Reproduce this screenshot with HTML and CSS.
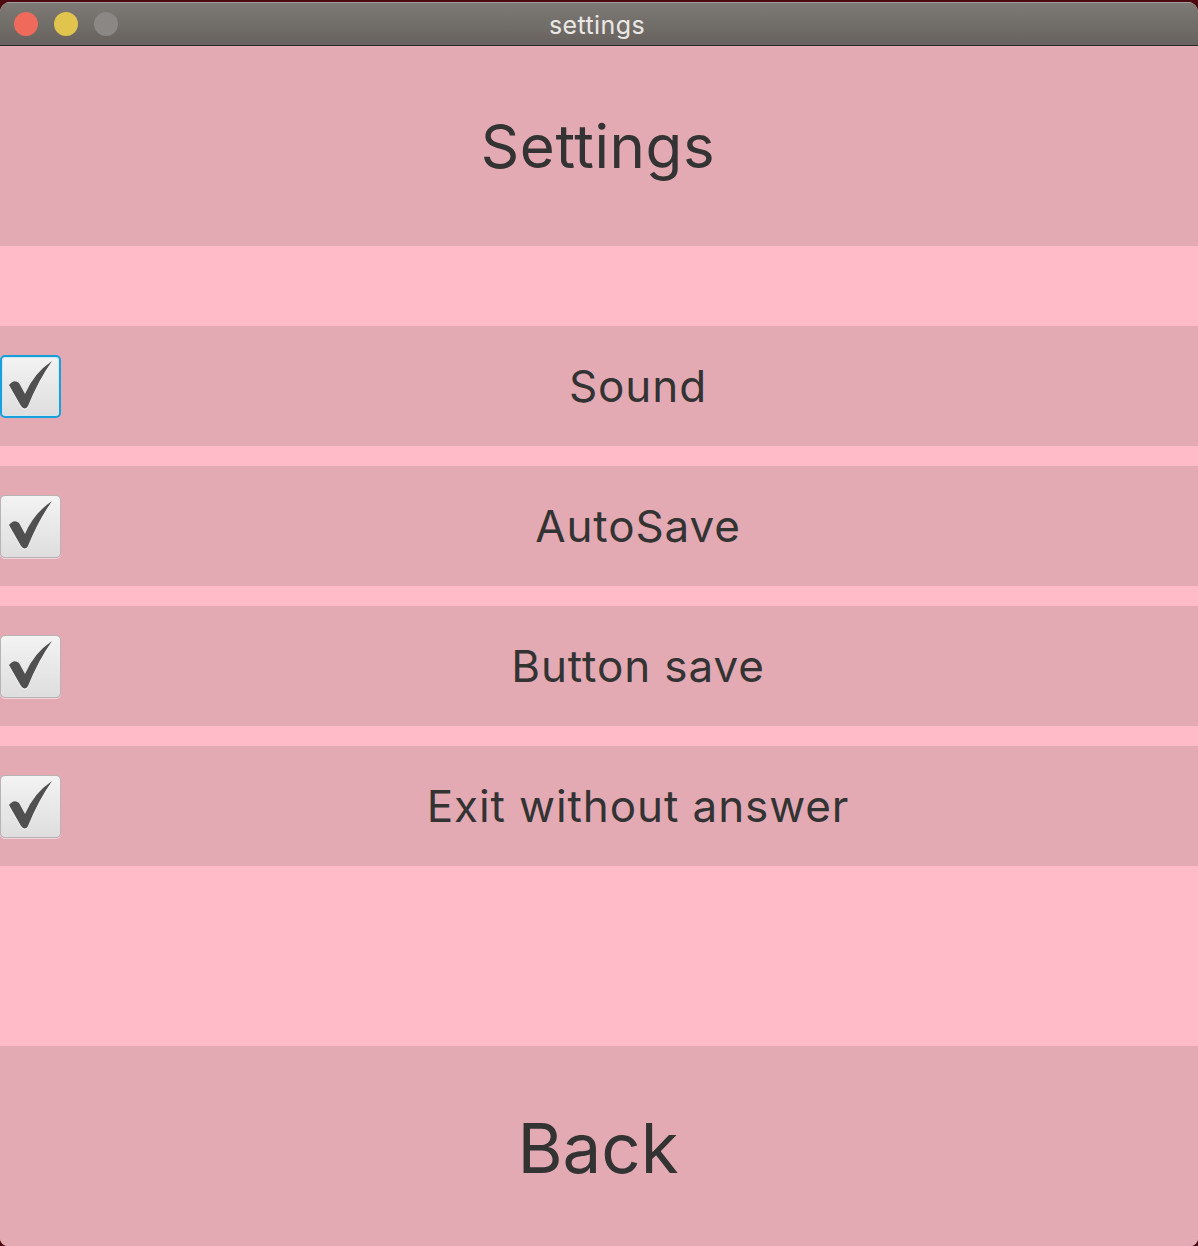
FILE: index.html
```html
<!DOCTYPE html>
<html>
<head>
<meta charset="utf-8">
<link rel="stylesheet" href="styles.css">
</head>
<body>
<div class="window">
  <div class="titlebar">
    <div class="lights">
      <span class="light red"></span>
      <span class="light yellow"></span>
      <span class="light gray"></span>
    </div>
    <div class="title">settings</div>
  </div>
  <div class="content">
    <div class="header">Settings</div>
    <div class="spacer-top"></div>
    <div class="row">
      <div class="checkbox focused">
        <svg viewBox="0 0 60 60" class="check"><path class="shadow" d="M8 30 Q13 23.5 18 28 L24 39 Q33 18 51 6 Q37 26 27 51 Q24 56 20 51 Z"/><path d="M8 29 Q13 22.5 18 27 L24 38 Q33 17 51 5 Q37 25 27 50 Q24 55 20 50 Z"/></svg>
      </div>
      <div class="label">Sound</div>
    </div>
    <div class="gap"></div>
    <div class="row">
      <div class="checkbox">
        <svg viewBox="0 0 60 60" class="check"><path class="shadow" d="M8 30 Q13 23.5 18 28 L24 39 Q33 18 51 6 Q37 26 27 51 Q24 56 20 51 Z"/><path d="M8 29 Q13 22.5 18 27 L24 38 Q33 17 51 5 Q37 25 27 50 Q24 55 20 50 Z"/></svg>
      </div>
      <div class="label">AutoSave</div>
    </div>
    <div class="gap"></div>
    <div class="row">
      <div class="checkbox">
        <svg viewBox="0 0 60 60" class="check"><path class="shadow" d="M8 30 Q13 23.5 18 28 L24 39 Q33 18 51 6 Q37 26 27 51 Q24 56 20 51 Z"/><path d="M8 29 Q13 22.5 18 27 L24 38 Q33 17 51 5 Q37 25 27 50 Q24 55 20 50 Z"/></svg>
      </div>
      <div class="label">Button save</div>
    </div>
    <div class="gap"></div>
    <div class="row">
      <div class="checkbox">
        <svg viewBox="0 0 60 60" class="check"><path class="shadow" d="M8 30 Q13 23.5 18 28 L24 39 Q33 18 51 6 Q37 26 27 51 Q24 56 20 51 Z"/><path d="M8 29 Q13 22.5 18 27 L24 38 Q33 17 51 5 Q37 25 27 50 Q24 55 20 50 Z"/></svg>
      </div>
      <div class="label">Exit without answer</div>
    </div>
    <div class="spacer-bottom"></div>
    <div class="back">Back</div>
  </div>
</div>
</body>
</html>
```

FILE: styles.css
```css
* { box-sizing: border-box; }
html, body {
  margin: 0;
  padding: 0;
  width: 1198px;
  height: 1246px;
  overflow: hidden;
  background: #4a0a10;
}
body {
  font-family: Inter, "Noto Sans", sans-serif;
  color: #333333;
  padding-top: 2px;
}
.window {
  width: 1198px;
  height: 1244px;
  border-radius: 10px 10px 8px 8px;
  overflow: hidden;
  display: flex;
  flex-direction: column;
  background: #ffbcc8;
}
.titlebar {
  height: 44px;
  flex: none;
  background: linear-gradient(#7d7975, #67625d);
  border-top: 1px solid #a29d98;
  border-bottom: 1px solid #2a2725;
  display: flex;
  align-items: center;
  justify-content: center;
  position: relative;
}
.lights {
  position: absolute;
  left: 14px;
  top: 9px;
  display: flex;
  gap: 16px;
}
.light {
  width: 24px;
  height: 24px;
  border-radius: 50%;
  display: block;
}
.red { background: #ef6a5b; }
.yellow { background: #e1c44d; }
.gray { background: #8b8784; }
.title {
  font-size: 25px;
  color: #ebe8e5;
  letter-spacing: 0.4px;
  margin-top: 2px;
  margin-right: 4px;
}
.content {
  flex: 1;
  display: flex;
  flex-direction: column;
}
.header {
  height: 200px;
  background: #e4aab4;
  display: flex;
  align-items: center;
  justify-content: center;
  font-size: 60px;
  letter-spacing: 0.6px;
  padding-right: 2px;
}
.spacer-top { height: 80px; }
.row {
  height: 120px;
  background: #e4aab4;
  display: flex;
  align-items: center;
}
.gap { height: 20px; }
.checkbox {
  width: 61px;
  height: 63px;
  flex: none;
  margin-right: 17px;
  border-radius: 5px;
  border: 1px solid #b9b3b4;
  background: linear-gradient(#f3f3f3, #dedede);
  box-shadow: 0 1px 0 rgba(255,255,255,0.5);
  display: flex;
  align-items: center;
  justify-content: center;
}
.checkbox.focused {
  border: 2px solid #16a0dc;
  box-shadow: inset 0 0 0 1px #cfe7f2;
}
.check {
  width: 60px;
  height: 60px;
  flex: none;
}
.check path { fill: #505050; }
.check path.shadow { fill: #ffffff; }
.label {
  flex: 1;
  text-align: center;
  font-size: 44px;
  letter-spacing: 0.9px;
}
.spacer-bottom { height: 180px; }
.back {
  flex: 1;
  background: #e4aab4;
  display: flex;
  align-items: center;
  justify-content: center;
  font-size: 69px;
  letter-spacing: 0px;
  padding-top: 4px;
  padding-right: 2px;
}
```
